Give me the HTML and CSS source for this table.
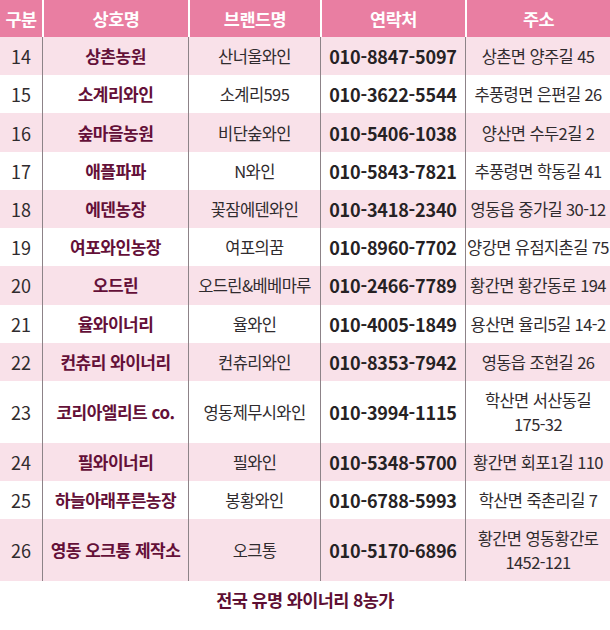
FILE: index.html
```html
<!DOCTYPE html>
<html lang="ko">
<head>
<meta charset="utf-8">
<title>전국 유명 와이너리</title>
<link rel="stylesheet" href="styles.css">
</head>
<body>
<div class="wrap">
  <div class="table">
    <div class="row head">
      <div class="c">구분</div><div class="c">상호명</div><div class="c">브랜드명</div><div class="c">연락처</div><div class="c">주소</div>
    </div>
    <div class="row pink">
      <div class="c num">14</div><div class="c name">상촌농원</div><div class="c">산너울와인</div><div class="c tel">010-8847-5097</div><div class="c">상촌면 양주길 45</div>
    </div>
    <div class="row">
      <div class="c num">15</div><div class="c name">소계리와인</div><div class="c">소계리595</div><div class="c tel">010-3622-5544</div><div class="c">추풍령면 은편길 26</div>
    </div>
    <div class="row pink">
      <div class="c num">16</div><div class="c name">숲마을농원</div><div class="c">비단숲와인</div><div class="c tel">010-5406-1038</div><div class="c">양산면 수두2길 2</div>
    </div>
    <div class="row">
      <div class="c num">17</div><div class="c name">애플파파</div><div class="c">N와인</div><div class="c tel">010-5843-7821</div><div class="c">추풍령면 학동길 41</div>
    </div>
    <div class="row pink">
      <div class="c num">18</div><div class="c name">에덴농장</div><div class="c">꽃잠에덴와인</div><div class="c tel">010-3418-2340</div><div class="c">영동읍 중가길 30-12</div>
    </div>
    <div class="row">
      <div class="c num">19</div><div class="c name">여포와인농장</div><div class="c">여포의꿈</div><div class="c tel">010-8960-7702</div><div class="c">양강면 유점지촌길 75</div>
    </div>
    <div class="row pink">
      <div class="c num">20</div><div class="c name">오드린</div><div class="c">오드린&amp;베베마루</div><div class="c tel">010-2466-7789</div><div class="c">황간면 황간동로 194</div>
    </div>
    <div class="row">
      <div class="c num">21</div><div class="c name">율와이너리</div><div class="c">율와인</div><div class="c tel">010-4005-1849</div><div class="c">용산면 율리5길 14-2</div>
    </div>
    <div class="row pink">
      <div class="c num">22</div><div class="c name">컨츄리 와이너리</div><div class="c">컨츄리와인</div><div class="c tel">010-8353-7942</div><div class="c">영동읍 조현길 26</div>
    </div>
    <div class="row tall">
      <div class="c num">23</div><div class="c name">코리아엘리트 co.</div><div class="c">영동제무시와인</div><div class="c tel">010-3994-1115</div><div class="c">학산면 서산동길<br>175-32</div>
    </div>
    <div class="row pink">
      <div class="c num">24</div><div class="c name">필와이너리</div><div class="c">필와인</div><div class="c tel">010-5348-5700</div><div class="c">황간면 회포1길 110</div>
    </div>
    <div class="row">
      <div class="c num">25</div><div class="c name">하늘아래푸른농장</div><div class="c">봉황와인</div><div class="c tel">010-6788-5993</div><div class="c">학산면 죽촌리길 7</div>
    </div>
    <div class="row pink tall">
      <div class="c num">26</div><div class="c name">영동 오크통 제작소</div><div class="c">오크통</div><div class="c tel">010-5170-6896</div><div class="c">황간면 영동황간로<br>1452-121</div>
    </div>
  </div>
  <p class="foot">전국 유명 와이너리 8농가</p>
</div>
</body>
</html>
```
FILE: styles.css
```css
html, body {
  margin: 0;
  padding: 0;
  background: #ffffff;
}
body {
  width: 610px;
  font-family: "Noto Sans CJK KR", "Noto Sans", sans-serif;
  color: #302b2e;
}
.table {
  display: flex;
  flex-direction: column;
}
.row {
  display: grid;
  grid-template-columns: 42px 146px 132px 145px 145px;
  height: 38.23px;
  background: #ffffff;
}
.row.pink {
  background: #f9e1e9;
}
.row.tall {
  height: 62px;
}
.row.head {
  height: 37px;
  background: #e97ea2;
}
.c {
  display: flex;
  align-items: center;
  justify-content: center;
  text-align: center;
  font-size: 16.5px;
  letter-spacing: -0.6px;
  line-height: 24px;
  border-left: 1px solid #8d8388;
  white-space: nowrap;
}
.c:first-child {
  border-left: none;
}
.head .c {
  color: #ffffff;
  font-weight: 700;
  font-size: 17.5px;
  letter-spacing: -0.5px;
  border-left: 2px solid #ffffff;
}
.head .c:first-child {
  border-left: none;
}
.num {
  font-size: 18px;
  letter-spacing: 0;
}
.name {
  color: #641038;
  font-weight: 700;
  font-size: 17px;
  letter-spacing: -0.5px;
}
.tel {
  color: #262224;
  font-weight: 700;
  font-size: 18px;
  letter-spacing: -0.2px;
}
.foot {
  margin: 0;
  padding-top: 8px;
  text-align: center;
  font-size: 17.5px;
  font-weight: 700;
  letter-spacing: -0.6px;
  line-height: 22px;
  color: #5e0f33;
}
```
